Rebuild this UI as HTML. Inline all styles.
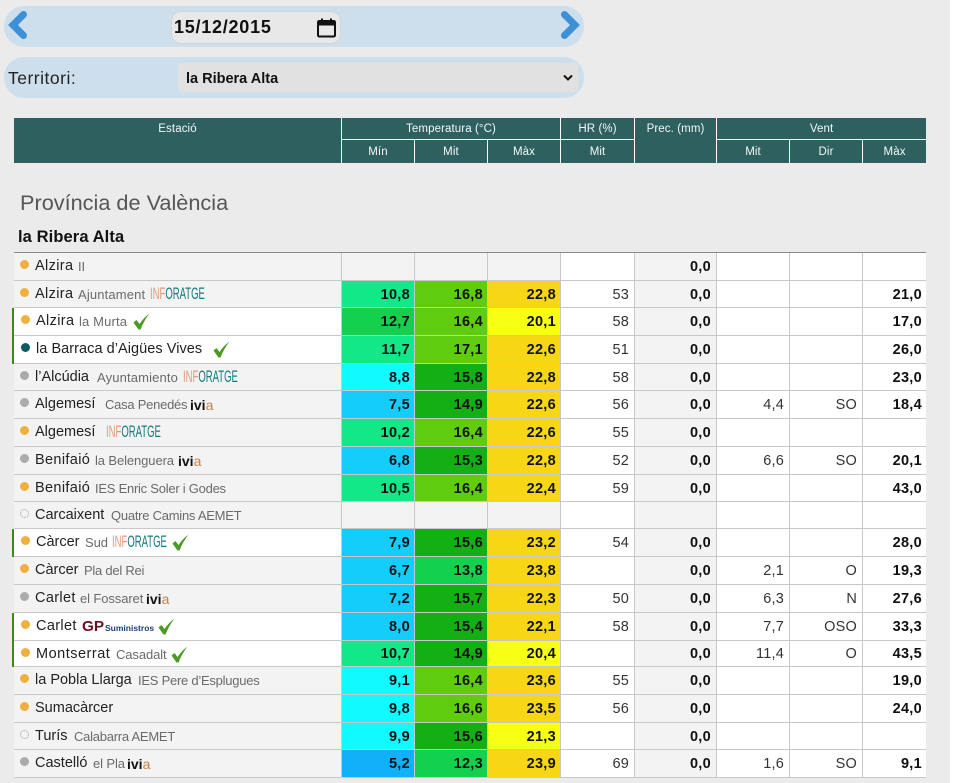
<!DOCTYPE html>
<html><head><meta charset="utf-8"><title>Estacions</title>
<style>
html,body{margin:0;padding:0;background:#fff;}
body{width:957px;height:783px;overflow:hidden;position:relative;font-family:"Liberation Sans",sans-serif;color:#222;}
#bg{position:absolute;left:0;top:0;width:950px;height:783px;background:#ebebeb;}
.bar{position:absolute;left:4px;width:580px;height:41px;border-radius:20px;background:#cddfec;}
#date{position:absolute;left:171px;top:11px;width:168px;height:31px;border:1px solid #cfd5d9;border-radius:10px;background:#e8e8e8;}
#date span{position:absolute;left:2px;top:5px;font:bold 18px/20px "Liberation Sans",sans-serif;letter-spacing:.75px;color:#111;}
#sel{position:absolute;left:178px;top:63px;width:400px;height:29px;border-radius:4px;background:#e1e1e1;}
#sel span{position:absolute;left:8px;top:7px;font:bold 14.5px/18px "Liberation Sans",sans-serif;color:#111;}
#ter{position:absolute;left:8px;top:67px;font-size:17.5px;line-height:22px;color:#222;letter-spacing:.5px;}
#h1{position:absolute;left:20px;top:189px;font-size:21.7px;line-height:27px;color:#555;}
#h2{position:absolute;left:18px;top:227px;font-weight:bold;font-size:16.5px;line-height:20px;color:#111;letter-spacing:.1px;}
table{position:absolute;left:14px;border-collapse:separate;border-spacing:0;table-layout:fixed;width:912px;}
#th{top:118px;height:45px;background:#2f6060;color:#fff;font-size:11.5px;letter-spacing:.1px;}
#th td{text-align:center;border-right:1px solid #fff;border-bottom:1px solid #fff;padding:1px 0 0;height:22px;box-sizing:border-box;color:#f2f7f7;vertical-align:middle;}
#th td.tp{vertical-align:top;padding-top:5px;border-bottom:0;}
#th tr.b td{border-bottom:0;height:23px;}
#th td.e{border-right:0;}
#d{top:252px;border-top:1px solid #888;}
#d td{box-sizing:border-box;padding:1px 5px 0 0;border-right:1px solid #c8c8c8;border-bottom:1px solid #c8c8c8;text-align:right;font-size:14.5px;line-height:16px;background:#fff;color:#333;vertical-align:middle;letter-spacing:.2px;}
#d td.l{position:relative;background:#f3f3f3;text-align:left;padding:0;letter-spacing:0;}
#d td.w{background:#fff;box-shadow:-2px 0 0 #3f8a12;}
#d td.g{background:#f3f3f3;}
#d td.x{font-weight:bold;color:#111;letter-spacing:.3px;}
#d td.y{border-right:0;padding-right:4px;}
.cy{background:#11faff!important}.sk{background:#14cdfb!important}.bl{background:#11b1f9!important}.te{background:#12e887!important}
.gr{background:#13d04f!important}.li{background:#5fcd0e!important}.dg{background:#14af14!important}.go{background:#f7d616!important}.ye{background:#f6ff14!important}
#d td.cy,#d td.sk,#d td.bl,#d td.te,#d td.gr,#d td.li,#d td.dg,#d td.go,#d td.ye{padding-right:4px;}
.o,.a,.t,.q{position:absolute;left:6px;top:7px;width:9px;height:9px;border-radius:50%;}
.o{background:#efb03d}.a{background:#ababab}.t{background:#0f5a5f}.q{box-sizing:border-box;border:1px dotted #999;}
.n,.s,.i,.v,.p,.u{position:absolute;top:5px;line-height:16px;white-space:nowrap;}
.n{font-size:14.5px;color:#222;}
.n.m{letter-spacing:.35px;}
.s{font-size:13px;color:#6a6a6a;letter-spacing:-.1px;top:6px;}
.s.k{letter-spacing:-.25px;}
.s.j{letter-spacing:.15px;}
.v{font-size:14px;font-weight:bold;color:#111;top:6px;}
.v b{font-weight:normal;color:#c8814a;}
.i{font-size:17px;transform:scaleX(.56);transform-origin:0 50%;color:#137a7d;}
.i b{font-weight:normal;color:#dd9a78;}
.p{font-size:15px;font-weight:bold;color:#6b1020;transform:scaleX(1.02);transform-origin:0 50%;top:6px;}
.u{font-size:8.5px;font-weight:bold;color:#1d3f74;top:7px;}
svg.c{position:absolute;top:5px;width:17px;height:17px;}
</style></head><body>
<div id="bg"></div>
<div class="bar" style="top:6px"></div>
<svg style="position:absolute;left:7px;top:10px" width="22" height="30" viewBox="0 0 22 30"><path d="M16.500 4.500 L6 15 L16.500 25.500" fill="none" stroke="#3d8fd6" stroke-width="7" stroke-linecap="round" stroke-linejoin="miter"/></svg>
<svg style="position:absolute;left:559px;top:10px" width="22" height="30" viewBox="0 0 22 30"><path d="M5.500 4.500 L16 15 L5.500 25.500" fill="none" stroke="#3d8fd6" stroke-width="7" stroke-linecap="round" stroke-linejoin="miter"/></svg>
<div id="date"><span>15/12/2015</span>
<svg style="position:absolute;left:145px;top:5px" width="19" height="21" viewBox="0 0 19 21"><path d="M2.500 4 H16.500 Q18 4 18 5.500 V18 Q18 19.500 16.500 19.500 H2.500 Q1 19.500 1 18 V5.500 Q1 4 2.500 4 Z" fill="none" stroke="#111" stroke-width="2"/><path d="M1 4 H18 V8.500 H1 Z" fill="#111"/><path d="M5 1.500 V4 M14 1.500 V4" stroke="#111" stroke-width="2"/></svg></div>
<div class="bar" style="top:57px"></div>
<div id="ter">Territori:</div>
<div id="sel"><span>la Ribera Alta</span>
<svg style="position:absolute;left:385px;top:11px" width="10" height="7" viewBox="0 0 10 7"><path d="M1 1.500 L5 5.500 L9 1.500" fill="none" stroke="#111" stroke-width="2"/></svg></div>

<table id="th"><colgroup><col style="width:328px"><col style="width:73px"><col style="width:73px"><col style="width:73px"><col style="width:74px"><col style="width:82px"><col style="width:73px"><col style="width:73px"><col style="width:63px"></colgroup>
<tr><td rowspan="2" class="tp">Estació</td><td colspan="3">Temperatura (°C)</td><td>HR (%)</td><td rowspan="2" class="tp">Prec. (mm)</td><td colspan="3" class="e">Vent</td></tr>
<tr class="b"><td>Mín</td><td>Mit</td><td>Màx</td><td>Mit</td><td>Mit</td><td>Dir</td><td class="e">Màx</td></tr>
</table>

<div id="h1">Província de València</div>
<div id="h2">la Ribera Alta</div>

<table id="d"><colgroup><col style="width:328px"><col style="width:73px"><col style="width:73px"><col style="width:73px"><col style="width:74px"><col style="width:82px"><col style="width:73px"><col style="width:73px"><col style="width:63px"></colgroup>
<tr style="height:28px"><td class="l"><i class="o"></i><span class="n m" style="left:21px">Alzira</span><span class="s" style="left:64px">II</span></td><td class="g"></td><td class="g"></td><td class="g"></td><td></td><td class="g x">0,0</td><td></td><td></td><td class="y x"></td></tr>
<tr style="height:27px"><td class="l"><i class="o"></i><span class="n m" style="left:21px">Alzira</span><span class="s j" style="left:64px">Ajuntament</span><span class="i" style="left:136px"><b>INF</b>ORATGE</span></td><td class="x te">10,8</td><td class="x li">16,8</td><td class="x go">22,8</td><td>53</td><td class="g x">0,0</td><td></td><td></td><td class="y x">21,0</td></tr>
<tr style="height:28px"><td class="l w"><i class="o" style="left:7px"></i><span class="n m" style="left:22px">Alzira</span><span class="s j" style="left:65px">la Murta</span><svg class="c" style="left:119px" viewBox="0 0 17 17"><path d="M0.500 9.500 L3.500 7 L6.500 11 Q10.500 5 16.500 0.500 Q11 7.500 7.500 16.500 L5.500 16.500 Z" fill="#4b9a22"/></svg></td><td class="x gr">12,7</td><td class="x li">16,4</td><td class="x ye">20,1</td><td>58</td><td class="g x">0,0</td><td></td><td></td><td class="y x">17,0</td></tr>
<tr style="height:28px"><td class="l w"><i class="t" style="left:7px"></i><span class="n" style="left:22px;letter-spacing:.05px">la Barraca d’Aigües Vives</span><svg class="c" style="left:199px" viewBox="0 0 17 17"><path d="M0.500 9.500 L3.500 7 L6.500 11 Q10.500 5 16.500 0.500 Q11 7.500 7.500 16.500 L5.500 16.500 Z" fill="#4b9a22"/></svg></td><td class="x te">11,7</td><td class="x li">17,1</td><td class="x go">22,6</td><td>51</td><td class="g x">0,0</td><td></td><td></td><td class="y x">26,0</td></tr>
<tr style="height:27px"><td class="l"><i class="a"></i><span class="n" style="left:21px">l’Alcúdia</span><span class="s j" style="left:83px">Ayuntamiento</span><span class="i" style="left:169px"><b>INF</b>ORATGE</span></td><td class="x cy">8,8</td><td class="x dg">15,8</td><td class="x go">22,8</td><td>58</td><td class="g x">0,0</td><td></td><td></td><td class="y x">23,0</td></tr>
<tr style="height:28px"><td class="l"><i class="a"></i><span class="n" style="left:21px">Algemesí</span><span class="s k" style="left:91px">Casa Penedés</span><span class="v" style="left:176px">ivi<b>a</b></span></td><td class="x sk">7,5</td><td class="x dg">14,9</td><td class="x go">22,6</td><td>56</td><td class="g x">0,0</td><td>4,4</td><td>SO</td><td class="y x">18,4</td></tr>
<tr style="height:28px"><td class="l"><i class="o"></i><span class="n" style="left:21px">Algemesí</span><span class="i" style="left:92px"><b>INF</b>ORATGE</span></td><td class="x te">10,2</td><td class="x li">16,4</td><td class="x go">22,6</td><td>55</td><td class="g x">0,0</td><td></td><td></td><td class="y x"></td></tr>
<tr style="height:28px"><td class="l"><i class="a"></i><span class="n m" style="left:21px">Benifaió</span><span class="s" style="left:81px">la Belenguera</span><span class="v" style="left:164px">ivi<b>a</b></span></td><td class="x sk">6,8</td><td class="x dg">15,3</td><td class="x go">22,8</td><td>52</td><td class="g x">0,0</td><td>6,6</td><td>SO</td><td class="y x">20,1</td></tr>
<tr style="height:27px"><td class="l"><i class="o"></i><span class="n m" style="left:21px">Benifaió</span><span class="s k" style="left:81px">IES Enric Soler i Godes</span></td><td class="x te">10,5</td><td class="x li">16,4</td><td class="x go">22,4</td><td>59</td><td class="g x">0,0</td><td></td><td></td><td class="y x">43,0</td></tr>
<tr style="height:27px"><td class="l"><i class="q"></i><span class="n" style="left:21px">Carcaixent</span><span class="s k" style="left:97px">Quatre Camins AEMET</span></td><td class="g"></td><td class="g"></td><td class="g"></td><td></td><td class="g x"></td><td></td><td></td><td class="y x"></td></tr>
<tr style="height:28px"><td class="l w"><i class="o" style="left:7px"></i><span class="n" style="left:22px">Càrcer</span><span class="s" style="left:71px">Sud</span><span class="i" style="left:98px"><b>INF</b>ORATGE</span><svg class="c" style="left:158px" viewBox="0 0 17 17"><path d="M0.500 9.500 L3.500 7 L6.500 11 Q10.500 5 16.500 0.500 Q11 7.500 7.500 16.500 L5.500 16.500 Z" fill="#4b9a22"/></svg></td><td class="x sk">7,9</td><td class="x dg">15,6</td><td class="x go">23,2</td><td>54</td><td class="g x">0,0</td><td></td><td></td><td class="y x">28,0</td></tr>
<tr style="height:28px"><td class="l"><i class="o"></i><span class="n" style="left:21px">Càrcer</span><span class="s k" style="left:70px">Pla del Rei</span></td><td class="x sk">6,7</td><td class="x gr">13,8</td><td class="x go">23,8</td><td></td><td class="g x">0,0</td><td>2,1</td><td>O</td><td class="y x">19,3</td></tr>
<tr style="height:28px"><td class="l"><i class="a"></i><span class="n m" style="left:21px">Carlet</span><span class="s" style="left:66px">el Fossaret</span><span class="v" style="left:132px">ivi<b>a</b></span></td><td class="x sk">7,2</td><td class="x dg">15,7</td><td class="x go">22,3</td><td>50</td><td class="g x">0,0</td><td>6,3</td><td>N</td><td class="y x">27,6</td></tr>
<tr style="height:28px"><td class="l w"><i class="o" style="left:7px"></i><span class="n m" style="left:22px">Carlet</span><span class="p" style="left:68px">GP</span><span class="u" style="left:91px">Suministros</span><svg class="c" style="left:144px" viewBox="0 0 17 17"><path d="M0.500 9.500 L3.500 7 L6.500 11 Q10.500 5 16.500 0.500 Q11 7.500 7.500 16.500 L5.500 16.500 Z" fill="#4b9a22"/></svg></td><td class="x sk">8,0</td><td class="x dg">15,4</td><td class="x go">22,1</td><td>58</td><td class="g x">0,0</td><td>7,7</td><td>OSO</td><td class="y x">33,3</td></tr>
<tr style="height:26px"><td class="l w"><i class="o" style="left:7px"></i><span class="n" style="left:22px;letter-spacing:.5px">Montserrat</span><span class="s" style="left:102px">Casadalt</span><svg class="c" style="left:157px" viewBox="0 0 17 17"><path d="M0.500 9.500 L3.500 7 L6.500 11 Q10.500 5 16.500 0.500 Q11 7.500 7.500 16.500 L5.500 16.500 Z" fill="#4b9a22"/></svg></td><td class="x te">10,7</td><td class="x dg">14,9</td><td class="x ye">20,4</td><td></td><td class="g x">0,0</td><td>11,4</td><td>O</td><td class="y x">43,5</td></tr>
<tr style="height:28px"><td class="l"><i class="o"></i><span class="n" style="left:21px">la Pobla Llarga</span><span class="s k" style="left:124px">IES Pere d’Esplugues</span></td><td class="x cy">9,1</td><td class="x li">16,4</td><td class="x go">23,6</td><td>55</td><td class="g x">0,0</td><td></td><td></td><td class="y x">19,0</td></tr>
<tr style="height:28px"><td class="l"><i class="o"></i><span class="n" style="left:21px">Sumacàrcer</span></td><td class="x cy">9,8</td><td class="x li">16,6</td><td class="x go">23,5</td><td>56</td><td class="g x">0,0</td><td></td><td></td><td class="y x">24,0</td></tr>
<tr style="height:27px"><td class="l"><i class="q"></i><span class="n" style="left:21px">Turís</span><span class="s k" style="left:60px">Calabarra AEMET</span></td><td class="x cy">9,9</td><td class="x dg">15,6</td><td class="x ye">21,3</td><td></td><td class="g x">0,0</td><td></td><td></td><td class="y x"></td></tr>
<tr style="height:28px"><td class="l"><i class="a"></i><span class="n" style="left:21px">Castelló</span><span class="s" style="left:79px">el Pla</span><span class="v" style="left:113px">ivi<b>a</b></span></td><td class="x bl">5,2</td><td class="x gr">12,3</td><td class="x go">23,9</td><td>69</td><td class="g x">0,0</td><td>1,6</td><td>SO</td><td class="y x">9,1</td></tr>
</table>
</body></html>
